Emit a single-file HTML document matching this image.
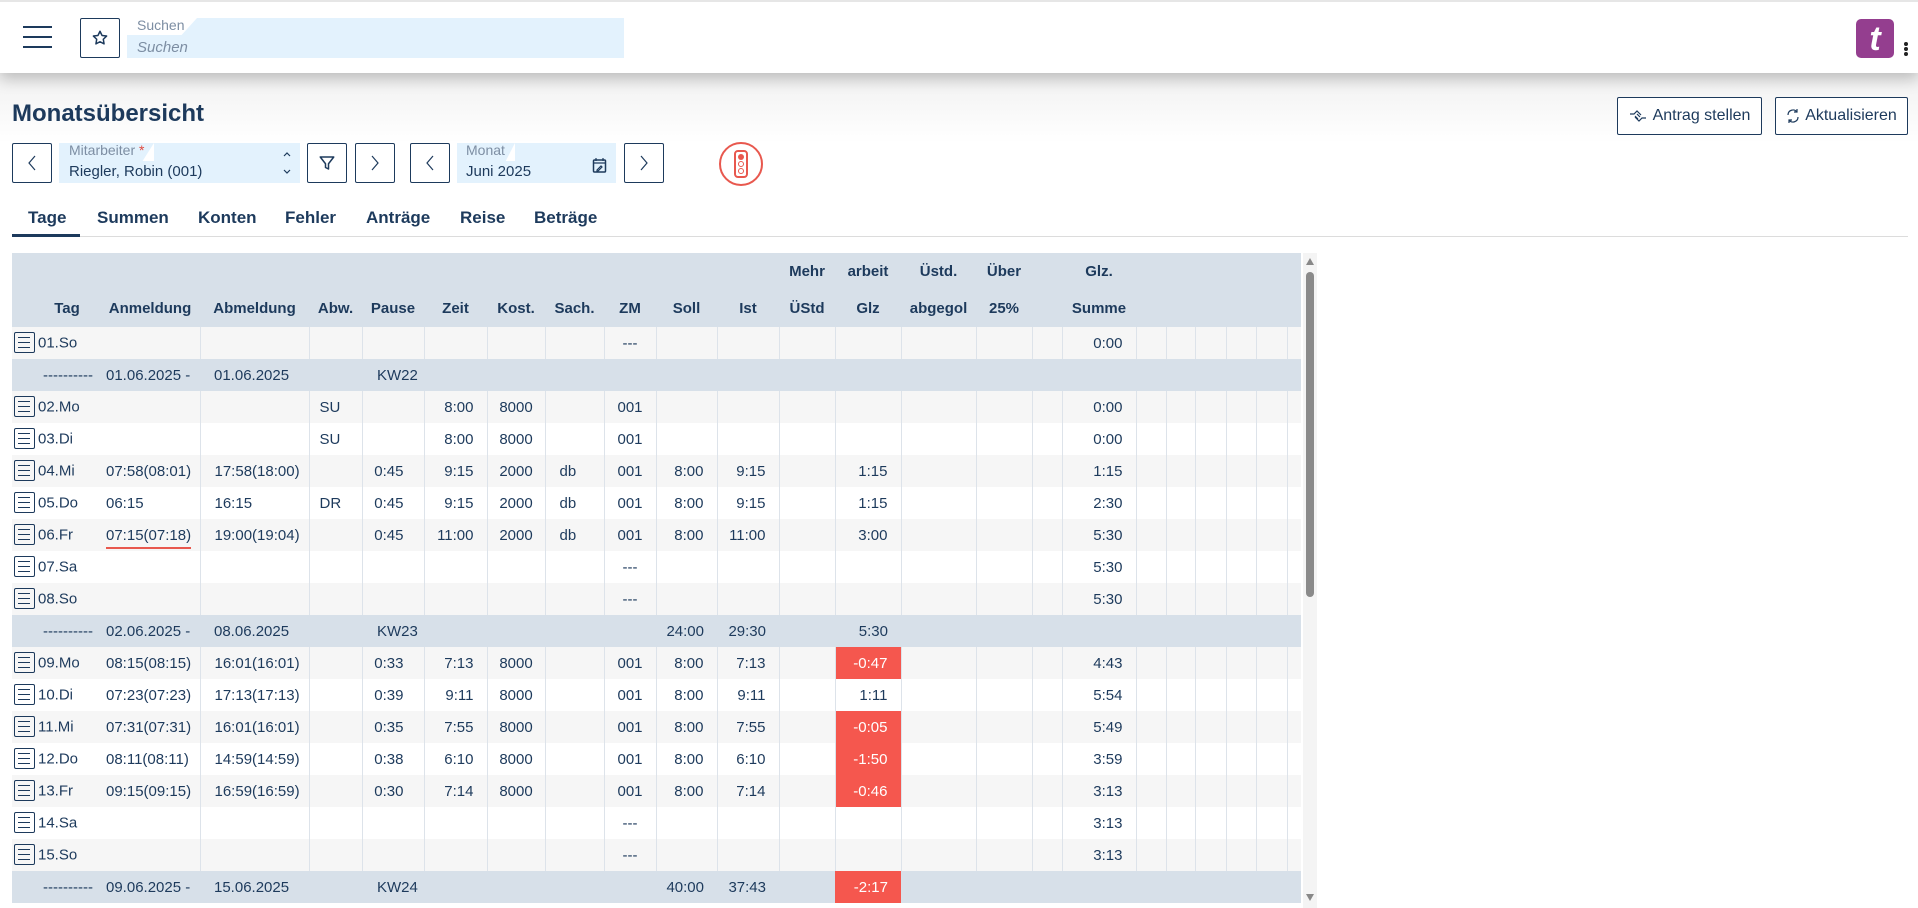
<!DOCTYPE html>
<html><head><meta charset="utf-8"><style>
*{box-sizing:border-box;margin:0;padding:0}
body{width:1918px;height:908px;overflow:hidden;background:#fff;font-family:"Liberation Sans Narrow","Liberation Sans",sans-serif;color:#1d3a5c;position:relative}
.hdr{position:absolute;left:0;top:0;width:1918px;height:73px;background:#fff;border-top:2px solid #e6e6e6;box-shadow:0 6px 14px rgba(0,0,0,.22);z-index:2}
.grad{position:absolute;left:0;top:73px;width:1918px;height:70px;background:linear-gradient(#f1f1f1,#fff)}
.btn{position:absolute;border:1px solid #1d3a5c;border-radius:2px;background:#fff;display:flex;align-items:center;justify-content:center}
.fld{position:absolute;background:#e3f2fd}
.lbl{position:absolute;font-size:14px;color:#7d8ea3}
.val{position:absolute;font-size:15px;color:#1d3a5c}
.tabs span{position:absolute;top:208px;font-size:17px;font-weight:bold;color:#1d3a5c}
table{position:absolute;left:12px;top:253px;border-collapse:collapse;table-layout:fixed;font-size:15px}
td,th{height:32px;padding:0;white-space:nowrap;overflow:hidden}
thead th{background:#d7e0e9;font-weight:bold;text-align:center;vertical-align:top;height:74px;line-height:37px;font-size:15px}
tbody td{border-left:1px solid #dde3ea}
tbody td.n{border-left:none}
tr.g td{background:#f6f6f6}
tr.w td{background:#fff}
tr.s td{background:#d7e0e9;border-left:none}
.r{text-align:right;padding-right:13px}
.c{text-align:center}
.l{padding-left:6px}
.red{background:#f5574e!important;color:#fff}
.ic{display:inline-block;width:21px;height:21px;border:1.5px solid #1d3a5c;border-radius:2px;vertical-align:middle;margin:0 3px 0 2px;position:relative;top:-1px;background:linear-gradient(#1d3a5c,#1d3a5c) 3px 4px/12px 1.3px no-repeat,linear-gradient(#1d3a5c,#1d3a5c) 3px 9px/12px 1.3px no-repeat,linear-gradient(#1d3a5c,#1d3a5c) 3px 14px/12px 1.3px no-repeat}
</style></head><body>
<div class="hdr">
 <div style="position:absolute;left:23px;top:24px;width:29px;height:2px;background:#1d3a5c;box-shadow:0 10px 0 #1d3a5c,0 20px 0 #1d3a5c"></div>
 <div class="btn" style="left:80px;top:16px;width:40px;height:40px"><svg width="18" height="18" viewBox="0 0 24 24"><path d="M12 3l2.7 5.6 6.1.8-4.4 4.3 1 6.1L12 17l-5.4 2.8 1-6.1L3.2 9.4l6.1-.8z" fill="none" stroke="#1d3a5c" stroke-width="2" stroke-linejoin="round"/></svg></div>
 <div class="fld" style="left:127px;top:16px;width:497px;height:40px"></div>
 <div style="position:absolute;left:127px;top:16px;width:70px;height:17px;background:#fff;clip-path:polygon(0 0,100% 0,78% 100%,0 100%)"></div>
 <div class="lbl" style="left:137px;top:15px">Suchen</div>
 <div class="val" style="left:137px;top:37px;font-style:italic;color:#7d8ea3">Suchen</div>
 <div style="position:absolute;left:1856px;top:17px;width:38px;height:39px;background:#943e8f;border-radius:5px;color:#fff;font:bold italic 34px 'Liberation Sans',sans-serif;text-align:center;line-height:40px">t</div>
 <div style="position:absolute;left:1904px;top:40px;width:4px;height:4px;border-radius:50%;background:#222;box-shadow:0 5px 0 #222,0 10px 0 #222"></div>
</div>
<div class="grad"></div>
<div style="position:absolute;left:12px;top:100px;font-size:24px;font-weight:bold;color:#1d3a5c">Monatsübersicht</div>
<div class="btn" style="left:1617px;top:97px;width:145px;height:38px;font-size:16px;gap:6px"><svg width="18" height="14" viewBox="0 0 18 14"><path d="M1 5h4l3-3 4 4M17 9h-4l-3 3-4-4M6 7l3 3M8 5l3 3" fill="none" stroke="#1d3a5c" stroke-width="1.2"/></svg>Antrag stellen</div>
<div class="btn" style="left:1775px;top:97px;width:133px;height:38px;font-size:16px;gap:5px"><svg width="14" height="16" viewBox="0 0 14 16"><path d="M11 4A5 5 0 0 0 2 7M3 12a5 5 0 0 0 9-3M11 1v3H8M3 15v-3h3" fill="none" stroke="#1d3a5c" stroke-width="1.2"/></svg>Aktualisieren</div>

<div class="btn" style="left:12px;top:143px;width:40px;height:40px"><svg width="10" height="16"><path d="M8 1L2 8l6 7" fill="none" stroke="#1d3a5c" stroke-width="1.2"/></svg></div>
<div class="fld" style="left:59px;top:143px;width:241px;height:40px"></div>
<div style="position:absolute;left:59px;top:143px;width:95px;height:18px;background:#fff;clip-path:polygon(100% 0,100% 100%,88% 100%)"></div>
<div style="position:absolute;left:154px;top:143px;width:146px;height:18px;background:#e3f2fd"></div>
<div class="lbl" style="left:69px;top:142px">Mitarbeiter <span style="color:#e04a3f">*</span></div>
<div class="val" style="left:69px;top:163px">Riegler, Robin (001)</div>
<svg style="position:absolute;left:282px;top:150px" width="10" height="26"><path d="M2 6l3-3 3 3M2 20l3 3 3-3" fill="none" stroke="#1d3a5c" stroke-width="1.2"/></svg>
<div class="btn" style="left:307px;top:143px;width:40px;height:40px"><svg width="18" height="18" viewBox="0 0 24 24"><path d="M3 4h18l-7 9v7l-4-2v-5z" fill="none" stroke="#1d3a5c" stroke-width="2" stroke-linejoin="round"/></svg></div>
<div class="btn" style="left:355px;top:143px;width:40px;height:40px"><svg width="10" height="16"><path d="M2 1l6 7-6 7" fill="none" stroke="#1d3a5c" stroke-width="1.2"/></svg></div>
<div class="btn" style="left:410px;top:143px;width:40px;height:40px"><svg width="10" height="16"><path d="M8 1L2 8l6 7" fill="none" stroke="#1d3a5c" stroke-width="1.2"/></svg></div>
<div class="fld" style="left:457px;top:143px;width:159px;height:40px"></div>
<div style="position:absolute;left:457px;top:143px;width:58px;height:18px;background:#fff;clip-path:polygon(100% 0,100% 100%,84% 100%)"></div>
<div style="position:absolute;left:515px;top:143px;width:101px;height:18px;background:#e3f2fd"></div>
<div class="lbl" style="left:466px;top:142px">Monat</div>
<div class="val" style="left:466px;top:163px">Juni 2025</div>
<svg style="position:absolute;left:592px;top:157px" width="15" height="16" viewBox="0 0 15 16"><rect x="1.5" y="3" width="12" height="12" rx="1" fill="none" stroke="#1d3a5c" stroke-width="1.5"/><path d="M4 1v3M11 1v3M1.5 6h12M5 13l4-4 1 1-4 4H5z" stroke="#1d3a5c" stroke-width="1.2" fill="none"/></svg>
<div class="btn" style="left:624px;top:143px;width:40px;height:40px"><svg width="10" height="16"><path d="M2 1l6 7-6 7" fill="none" stroke="#1d3a5c" stroke-width="1.2"/></svg></div>
<div style="position:absolute;left:719px;top:142px;width:44px;height:44px;border:2px solid #e8584e;border-radius:50%"></div>
<div style="position:absolute;left:734px;top:150px;width:14px;height:28px;border:2px solid #e8584e;border-radius:4px"></div>
<div style="position:absolute;left:738px;top:154px;width:6px;height:6px;border-radius:50%;background:#e8584e"></div>
<div style="position:absolute;left:738px;top:161px;width:6px;height:6px;border-radius:50%;border:1.5px solid #e8584e"></div>
<div style="position:absolute;left:738px;top:168px;width:6px;height:6px;border-radius:50%;border:1.5px solid #e8584e"></div>

<div class="tabs"><span style="left:28px">Tage</span><span style="left:97px">Summen</span><span style="left:198px">Konten</span><span style="left:285px">Fehler</span><span style="left:366px">Anträge</span><span style="left:460px">Reise</span><span style="left:534px">Beträge</span></div>
<div style="position:absolute;left:12px;top:236px;width:1896px;height:1px;background:#dcdcdc"></div>
<div style="position:absolute;left:12px;top:234px;width:68px;height:3px;background:#1d3a5c"></div>

<table>
<colgroup><col style="width:88px"><col style="width:100px"><col style="width:109px"><col style="width:53px"><col style="width:62px"><col style="width:63px"><col style="width:58px"><col style="width:59px"><col style="width:52px"><col style="width:61px"><col style="width:62px"><col style="width:56px"><col style="width:66px"><col style="width:75px"><col style="width:56px"><col style="width:30px"><col style="width:74px"><col style="width:30px"><col style="width:29px"><col style="width:31px"><col style="width:30px"><col style="width:31px"><col style="width:14px"></colgroup>
<thead><tr><th style="padding-left:22px"><br>Tag</th><th><br>Anmeldung</th><th><br>Abmeldung</th><th><br>Abw.</th><th><br>Pause</th><th><br>Zeit</th><th><br>Kost.</th><th><br>Sach.</th><th><br>ZM</th><th><br>Soll</th><th><br>Ist</th><th>Mehr<br>ÜStd</th><th>arbeit<br>Glz</th><th>Üstd.<br>abgegol</th><th>Über<br>25%</th><th></th><th>Glz.<br>Summe</th><th></th><th></th><th></th><th></th><th></th><th></th></tr></thead>
<tbody>
<tr class="g"><td class="n"><span class="ic"></span>01.So</td><td class="n"></td><td></td><td></td><td></td><td></td><td></td><td></td><td class="c">---</td><td></td><td></td><td></td><td></td><td></td><td></td><td></td><td class="r">0:00</td><td></td><td></td><td></td><td></td><td></td><td></td></tr>
<tr class="s"><td style="padding-left:31px">----------</td><td class="l">01.06.2025 -</td><td style="padding-left:14px">01.06.2025</td><td></td><td style="padding-left:15px">KW22</td><td></td><td></td><td></td><td></td><td></td><td></td><td></td><td></td><td></td><td></td><td></td><td></td><td></td><td></td><td></td><td></td><td></td><td></td></tr>
<tr class="g"><td class="n"><span class="ic"></span>02.Mo</td><td class="n"></td><td></td><td style="padding-left:10px">SU</td><td></td><td class="r">8:00</td><td class="c">8000</td><td></td><td class="c">001</td><td></td><td></td><td></td><td></td><td></td><td></td><td></td><td class="r">0:00</td><td></td><td></td><td></td><td></td><td></td><td></td></tr>
<tr class="w"><td class="n"><span class="ic"></span>03.Di</td><td class="n"></td><td></td><td style="padding-left:10px">SU</td><td></td><td class="r">8:00</td><td class="c">8000</td><td></td><td class="c">001</td><td></td><td></td><td></td><td></td><td></td><td></td><td></td><td class="r">0:00</td><td></td><td></td><td></td><td></td><td></td><td></td></tr>
<tr class="g"><td class="n"><span class="ic"></span>04.Mi</td><td class="n l">07:58(08:01)</td><td style="padding-left:14px">17:58(18:00)</td><td></td><td class="r" style="padding-right:20px">0:45</td><td class="r">9:15</td><td class="c">2000</td><td style="padding-left:14px">db</td><td class="c">001</td><td class="r">8:00</td><td class="r">9:15</td><td></td><td class="r">1:15</td><td></td><td></td><td></td><td class="r">1:15</td><td></td><td></td><td></td><td></td><td></td><td></td></tr>
<tr class="w"><td class="n"><span class="ic"></span>05.Do</td><td class="n l">06:15</td><td style="padding-left:14px">16:15</td><td style="padding-left:10px">DR</td><td class="r" style="padding-right:20px">0:45</td><td class="r">9:15</td><td class="c">2000</td><td style="padding-left:14px">db</td><td class="c">001</td><td class="r">8:00</td><td class="r">9:15</td><td></td><td class="r">1:15</td><td></td><td></td><td></td><td class="r">2:30</td><td></td><td></td><td></td><td></td><td></td><td></td></tr>
<tr class="g"><td class="n"><span class="ic"></span>06.Fr</td><td class="n l"><span style="border-bottom:2px solid #e8584e;padding-bottom:3px">07:15(07:18)</span></td><td style="padding-left:14px">19:00(19:04)</td><td></td><td class="r" style="padding-right:20px">0:45</td><td class="r">11:00</td><td class="c">2000</td><td style="padding-left:14px">db</td><td class="c">001</td><td class="r">8:00</td><td class="r">11:00</td><td></td><td class="r">3:00</td><td></td><td></td><td></td><td class="r">5:30</td><td></td><td></td><td></td><td></td><td></td><td></td></tr>
<tr class="w"><td class="n"><span class="ic"></span>07.Sa</td><td class="n"></td><td></td><td></td><td></td><td></td><td></td><td></td><td class="c">---</td><td></td><td></td><td></td><td></td><td></td><td></td><td></td><td class="r">5:30</td><td></td><td></td><td></td><td></td><td></td><td></td></tr>
<tr class="g"><td class="n"><span class="ic"></span>08.So</td><td class="n"></td><td></td><td></td><td></td><td></td><td></td><td></td><td class="c">---</td><td></td><td></td><td></td><td></td><td></td><td></td><td></td><td class="r">5:30</td><td></td><td></td><td></td><td></td><td></td><td></td></tr>
<tr class="s"><td style="padding-left:31px">----------</td><td class="l">02.06.2025 -</td><td style="padding-left:14px">08.06.2025</td><td></td><td style="padding-left:15px">KW23</td><td></td><td></td><td></td><td></td><td class="r">24:00</td><td class="r">29:30</td><td></td><td class="r">5:30</td><td></td><td></td><td></td><td></td><td></td><td></td><td></td><td></td><td></td><td></td></tr>
<tr class="g"><td class="n"><span class="ic"></span>09.Mo</td><td class="n l">08:15(08:15)</td><td style="padding-left:14px">16:01(16:01)</td><td></td><td class="r" style="padding-right:20px">0:33</td><td class="r">7:13</td><td class="c">8000</td><td></td><td class="c">001</td><td class="r">8:00</td><td class="r">7:13</td><td></td><td class="r red">-0:47</td><td></td><td></td><td></td><td class="r">4:43</td><td></td><td></td><td></td><td></td><td></td><td></td></tr>
<tr class="w"><td class="n"><span class="ic"></span>10.Di</td><td class="n l">07:23(07:23)</td><td style="padding-left:14px">17:13(17:13)</td><td></td><td class="r" style="padding-right:20px">0:39</td><td class="r">9:11</td><td class="c">8000</td><td></td><td class="c">001</td><td class="r">8:00</td><td class="r">9:11</td><td></td><td class="r">1:11</td><td></td><td></td><td></td><td class="r">5:54</td><td></td><td></td><td></td><td></td><td></td><td></td></tr>
<tr class="g"><td class="n"><span class="ic"></span>11.Mi</td><td class="n l">07:31(07:31)</td><td style="padding-left:14px">16:01(16:01)</td><td></td><td class="r" style="padding-right:20px">0:35</td><td class="r">7:55</td><td class="c">8000</td><td></td><td class="c">001</td><td class="r">8:00</td><td class="r">7:55</td><td></td><td class="r red">-0:05</td><td></td><td></td><td></td><td class="r">5:49</td><td></td><td></td><td></td><td></td><td></td><td></td></tr>
<tr class="w"><td class="n"><span class="ic"></span>12.Do</td><td class="n l">08:11(08:11)</td><td style="padding-left:14px">14:59(14:59)</td><td></td><td class="r" style="padding-right:20px">0:38</td><td class="r">6:10</td><td class="c">8000</td><td></td><td class="c">001</td><td class="r">8:00</td><td class="r">6:10</td><td></td><td class="r red">-1:50</td><td></td><td></td><td></td><td class="r">3:59</td><td></td><td></td><td></td><td></td><td></td><td></td></tr>
<tr class="g"><td class="n"><span class="ic"></span>13.Fr</td><td class="n l">09:15(09:15)</td><td style="padding-left:14px">16:59(16:59)</td><td></td><td class="r" style="padding-right:20px">0:30</td><td class="r">7:14</td><td class="c">8000</td><td></td><td class="c">001</td><td class="r">8:00</td><td class="r">7:14</td><td></td><td class="r red">-0:46</td><td></td><td></td><td></td><td class="r">3:13</td><td></td><td></td><td></td><td></td><td></td><td></td></tr>
<tr class="w"><td class="n"><span class="ic"></span>14.Sa</td><td class="n"></td><td></td><td></td><td></td><td></td><td></td><td></td><td class="c">---</td><td></td><td></td><td></td><td></td><td></td><td></td><td></td><td class="r">3:13</td><td></td><td></td><td></td><td></td><td></td><td></td></tr>
<tr class="g"><td class="n"><span class="ic"></span>15.So</td><td class="n"></td><td></td><td></td><td></td><td></td><td></td><td></td><td class="c">---</td><td></td><td></td><td></td><td></td><td></td><td></td><td></td><td class="r">3:13</td><td></td><td></td><td></td><td></td><td></td><td></td></tr>
<tr class="s"><td style="padding-left:31px">----------</td><td class="l">09.06.2025 -</td><td style="padding-left:14px">15.06.2025</td><td></td><td style="padding-left:15px">KW24</td><td></td><td></td><td></td><td></td><td class="r">40:00</td><td class="r">37:43</td><td></td><td class="r red">-2:17</td><td></td><td></td><td></td><td></td><td></td><td></td><td></td><td></td><td></td><td></td></tr>
</tbody></table>
<div style="position:absolute;left:1303px;top:253px;width:14px;height:655px;background:#f4f4f4"></div>
<div style="position:absolute;left:1306px;top:258px;width:0;height:0;border-left:4px solid transparent;border-right:4px solid transparent;border-bottom:7px solid #888"></div>
<div style="position:absolute;left:1306px;top:272px;width:8px;height:325px;background:#8a8a8a;border-radius:4px"></div>
<div style="position:absolute;left:1306px;top:894px;width:0;height:0;border-left:4px solid transparent;border-right:4px solid transparent;border-top:7px solid #888"></div>
</body></html>
